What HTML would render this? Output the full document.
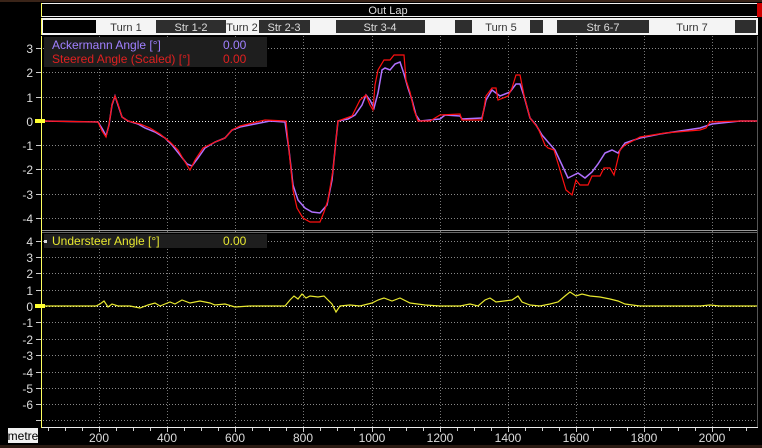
<!DOCTYPE html>
<html><head><style>
html,body{margin:0;padding:0;background:#000;width:762px;height:448px;overflow:hidden;font-family:"Liberation Sans",sans-serif}
svg text{font-family:"Liberation Sans",sans-serif}
</style></head><body>
<svg width="762" height="448" viewBox="0 0 762 448" xmlns="http://www.w3.org/2000/svg">
<rect width="762" height="448" fill="#000"/>
<rect x="0" y="0" width="762" height="2" fill="#3a2418"/>
<!-- Out lap bar -->
<rect x="41.5" y="3.5" width="716" height="13" fill="#000" stroke="#f0f0f0" stroke-width="1"/>
<rect x="41" y="3" width="1" height="14" fill="#ffff60"/>
<rect x="757" y="3" width="5" height="14" fill="#d00000"/>
<text x="388" y="14" font-size="11" fill="#ddd" text-anchor="middle">Out Lap</text>
<!-- segments -->
<rect x="41" y="18" width="717" height="17" fill="#f4f4f4"/>
<rect x="43" y="20" width="53" height="13" fill="#000"/>
<rect x="156" y="20" width="70" height="13" fill="#2e2e2e"/>
<rect x="259" y="20" width="51" height="13" fill="#2e2e2e"/>
<rect x="336" y="20" width="89" height="13" fill="#2e2e2e"/>
<rect x="455" y="20" width="17" height="13" fill="#2e2e2e"/>
<rect x="530" y="20" width="13" height="13" fill="#2e2e2e"/>
<rect x="557" y="20" width="92" height="13" fill="#2e2e2e"/>
<rect x="735" y="20" width="21" height="13" fill="#2e2e2e"/>
<rect x="41" y="18" width="1" height="17" fill="#ffff60"/>
<g font-size="11" text-anchor="middle">
<text x="126" y="31" fill="#333">Turn 1</text>
<text x="191" y="31" fill="#ddd">Str 1-2</text>
<text x="242" y="31" fill="#333">Turn 2</text>
<text x="284" y="31" fill="#ddd">Str 2-3</text>
<text x="380" y="31" fill="#ddd">Str 3-4</text>
<text x="501" y="31" fill="#333">Turn 5</text>
<text x="603" y="31" fill="#ddd">Str 6-7</text>
<text x="692" y="31" fill="#333">Turn 7</text>
</g>
<!-- top chart grid -->
<g stroke="#888" stroke-width="1" stroke-dasharray="1,2">
<line x1="43" y1="48.5" x2="757" y2="48.5"/><line x1="43" y1="72.5" x2="757" y2="72.5"/><line x1="43" y1="97.5" x2="757" y2="97.5"/>
<line x1="43" y1="145.5" x2="757" y2="145.5"/><line x1="43" y1="169.5" x2="757" y2="169.5"/><line x1="43" y1="194.5" x2="757" y2="194.5"/><line x1="43" y1="218.5" x2="757" y2="218.5"/>
<line x1="43" y1="241.5" x2="757" y2="241.5"/><line x1="43" y1="257.5" x2="757" y2="257.5"/><line x1="43" y1="273.5" x2="757" y2="273.5"/><line x1="43" y1="290.5" x2="757" y2="290.5"/>
<line x1="43" y1="322.5" x2="757" y2="322.5"/><line x1="43" y1="339.5" x2="757" y2="339.5"/><line x1="43" y1="355.5" x2="757" y2="355.5"/><line x1="43" y1="372.5" x2="757" y2="372.5"/><line x1="43" y1="388.5" x2="757" y2="388.5"/><line x1="43" y1="404.5" x2="757" y2="404.5"/><line x1="43" y1="420.5" x2="757" y2="420.5"/>
</g>
<g stroke="#777" stroke-width="1" stroke-dasharray="1,2">
<line x1="99.5" y1="36" x2="99.5" y2="428"/><line x1="167.5" y1="36" x2="167.5" y2="428"/><line x1="235.5" y1="36" x2="235.5" y2="428"/><line x1="303.5" y1="36" x2="303.5" y2="428"/><line x1="372.5" y1="36" x2="372.5" y2="428"/><line x1="440.5" y1="36" x2="440.5" y2="428"/><line x1="508.5" y1="36" x2="508.5" y2="428"/><line x1="576.5" y1="36" x2="576.5" y2="428"/><line x1="644.5" y1="36" x2="644.5" y2="428"/><line x1="712.5" y1="36" x2="712.5" y2="428"/>
</g>
<g stroke="#eee" stroke-width="1" stroke-dasharray="1,2">
<line x1="43" y1="121.5" x2="757" y2="121.5"/><line x1="43" y1="306.5" x2="757" y2="306.5"/>
</g>
<!-- divider between charts -->
<rect x="42" y="230" width="715" height="1" fill="#999"/>
<rect x="42" y="232" width="715" height="1" fill="#666"/>
<!-- right border -->
<rect x="757" y="36" width="1" height="392" fill="#555"/>
<!-- legend boxes -->
<rect x="44" y="37" width="223" height="30" fill="#1e1e1e"/>
<text x="52" y="49" font-size="12" fill="#a080ff">Ackermann Angle [°]</text>
<text x="223" y="49" font-size="12" fill="#a080ff">0.00</text>
<text x="52" y="63" font-size="12" fill="#e02020">Steered Angle (Scaled) [°]</text>
<text x="223" y="63" font-size="12" fill="#e02020">0.00</text>
<rect x="44" y="234" width="223" height="14" fill="#1e1e1e"/>
<rect x="44" y="240" width="3" height="3" fill="#ddd"/>
<text x="52" y="245" font-size="12" fill="#e8e830">Understeer Angle [°]</text>
<text x="223" y="245" font-size="12" fill="#e8e830">0.00</text>
<!-- curves -->
<polyline fill="none" stroke="#b070ff" stroke-width="1.5" points="42,121 98,122 103,130 106,136 109,125 112,105 115,96 118,105 122,117 128,121 138,124 145,128 155,132 165,138 172,145 180,155 187,164 192,166 198,158 205,148 215,142 225,138 232,130 240,127 255,124 270,121 285,122 289,150 293,185 298,200 305,208 312,212 320,213 327,205 332,180 336,140 338,121 348,119 355,115 362,105 366,95 370,100 374,108 378,93 382,70 385,68 390,70 395,64 400,62 404,74 408,88 412,100 416,115 420,121 440,119 445,115 460,116 462,119 482,118 486,100 492,90 500,96 510,92 516,84 520,84 524,96 530,118 536,125 542,135 548,142 555,150 562,165 568,178 572,176 578,173 585,178 592,172 598,164 605,153 612,150 618,153 625,143 640,138 660,134 680,131 700,128 712,124 740,121 757,121"/>
<polyline fill="none" stroke="#ff1010" stroke-width="1.2" points="42,121 98,122 102,131 106,137 109,125 112,104 115,96 118,104 122,117 128,121 140,124 150,128 160,134 170,142 178,150 185,162 190,170 195,160 203,148 215,142 225,138 232,130 240,126 265,120 286,121 289,150 293,190 297,208 303,218 310,222 320,222 324,212 328,200 333,170 336,140 338,121 352,116 360,100 366,95 370,105 373,110 375,85 378,70 384,60 390,60 394,55 404,55 406,80 410,92 414,110 418,121 430,121 440,115 460,114 462,120 482,120 486,96 492,88 496,88 498,100 508,96 512,88 516,75 520,75 524,95 530,118 538,128 545,145 548,148 554,150 560,170 566,190 572,195 576,180 580,185 588,185 592,176 600,176 604,168 610,168 614,175 620,150 625,145 640,137 665,133 700,130 706,128 710,122 740,121 757,121"/>
<polyline fill="none" stroke="#e8e830" stroke-width="1.2" points="42,306 96,306 100,304 104,301 108,307 112,304 118,306 130,306 140,308 148,305 155,303 160,306 170,302 175,304 182,300 190,303 200,301 210,303 215,305 225,304 235,307 250,306 265,306 285,306 290,300 294,296 298,299 302,294 306,298 310,296 318,297 324,296 328,300 332,304 336,312 340,306 350,305 360,306 372,303 378,300 384,298 392,301 400,298 410,303 425,305 440,306 460,306 470,304 478,306 485,300 490,298 496,302 504,301 512,300 518,296 522,302 530,305 540,306 550,304 558,302 565,296 570,292 576,296 582,294 590,296 600,297 610,299 618,301 625,304 640,306 700,306 710,305 720,306 757,306"/>
<!-- left y-axis -->
<rect x="41" y="36" width="1" height="392" fill="#ffff60"/>
<rect x="35" y="119" width="10" height="4" fill="#ffff30"/>
<rect x="35" y="304" width="10" height="4" fill="#ffff30"/>
<g stroke="#ccc" stroke-width="1">
<line x1="36" y1="48.5" x2="41" y2="48.5"/><line x1="36" y1="72.5" x2="41" y2="72.5"/><line x1="36" y1="97.5" x2="41" y2="97.5"/><line x1="36" y1="145.5" x2="41" y2="145.5"/><line x1="36" y1="169.5" x2="41" y2="169.5"/><line x1="36" y1="194.5" x2="41" y2="194.5"/><line x1="36" y1="218.5" x2="41" y2="218.5"/>
<line x1="36" y1="241.5" x2="41" y2="241.5"/><line x1="36" y1="257.5" x2="41" y2="257.5"/><line x1="36" y1="273.5" x2="41" y2="273.5"/><line x1="36" y1="290.5" x2="41" y2="290.5"/><line x1="36" y1="322.5" x2="41" y2="322.5"/><line x1="36" y1="339.5" x2="41" y2="339.5"/><line x1="36" y1="355.5" x2="41" y2="355.5"/><line x1="36" y1="372.5" x2="41" y2="372.5"/><line x1="36" y1="388.5" x2="41" y2="388.5"/><line x1="36" y1="404.5" x2="41" y2="404.5"/><line x1="36" y1="420.5" x2="41" y2="420.5"/>
</g>
<g font-size="12" fill="#ddd" text-anchor="end">
<text x="33" y="53">3</text><text x="33" y="77">2</text><text x="33" y="102">1</text><text x="33" y="126">0</text><text x="33" y="150">-1</text><text x="33" y="174">-2</text><text x="33" y="199">-3</text><text x="33" y="223">-4</text>
<text x="33" y="246">4</text><text x="33" y="262">3</text><text x="33" y="278">2</text><text x="33" y="295">1</text><text x="33" y="311">0</text><text x="33" y="327">-1</text><text x="33" y="344">-2</text><text x="33" y="360">-3</text><text x="33" y="377">-4</text><text x="33" y="393">-5</text><text x="33" y="409">-6</text>
</g>
<!-- x-axis -->
<rect x="42" y="427" width="716" height="1" fill="#eee"/>
<g stroke="#ccc"><path d="M48.5 428v3M65.5 428v3M82.5 428v3M99.5 428v4M116.5 428v3M133.5 428v3M150.5 428v3M167.5 428v4M184.5 428v3M201.5 428v3M218.5 428v3M235.5 428v4M252.5 428v3M269.5 428v3M286.5 428v3M303.5 428v4M320.5 428v3M337.5 428v3M354.5 428v3M372.5 428v4M389.5 428v3M406.5 428v3M423.5 428v3M440.5 428v4M457.5 428v3M474.5 428v3M491.5 428v3M508.5 428v4M525.5 428v3M542.5 428v3M559.5 428v3M576.5 428v4M593.5 428v3M610.5 428v3M627.5 428v3M644.5 428v4M661.5 428v3M678.5 428v3M695.5 428v3M712.5 428v4M729.5 428v3M746.5 428v3"/></g>
<g font-size="12" fill="#ddd" text-anchor="middle">
<text x="99" y="442">200</text><text x="167" y="442">400</text><text x="235" y="442">600</text><text x="303" y="442">800</text><text x="372" y="442">1000</text><text x="440" y="442">1200</text><text x="508" y="442">1400</text><text x="576" y="442">1600</text><text x="644" y="442">1800</text><text x="712" y="442">2000</text>
</g>
<rect x="8" y="428" width="30" height="15" fill="#f0f0f0"/>
<text x="23" y="440" font-size="12" fill="#000" text-anchor="middle">metre</text>
<rect x="0" y="445" width="762" height="3" fill="#2a1a12"/>
</svg>
</body></html>
